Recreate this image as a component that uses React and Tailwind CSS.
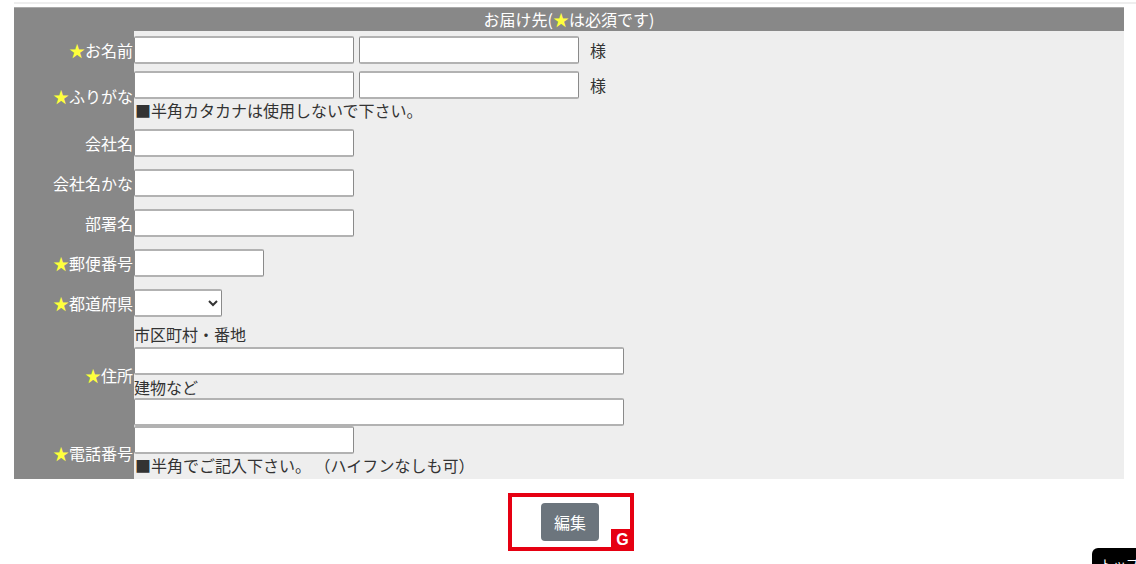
const inputCls =
  "h-[28px] bg-white border border-[#8a8a8a] border-t-2 border-b-2 border-t-[#b2b2b2] border-b-[#b2b2b2] rounded-[2px] box-border outline-none";

const Label = ({ text, required }) => (
  <div className="w-[120px] shrink-0 bg-[#888] flex items-center justify-end text-white text-[16px] leading-[20px] whitespace-nowrap pr-[1px]">
    {required && <span className="text-[#ffff3c]">★</span>}
    {text}
  </div>
);

const Row = ({ label, required, className = "", children }) => (
  <div className="flex">
    <Label text={label} required={required} />
    <div className={"flex-1 bg-[#eee] text-[#333] text-[16px] leading-[20px] " + className}>{children}</div>
  </div>
);

const App = () => {
  return (
    <main className="relative min-h-[564px] bg-white font-['Noto_Sans_CJK_JP','Noto_Sans',sans-serif] overflow-hidden">
      <div className="ml-[14px] mt-[2px] h-[2px] bg-[#eee]"></div>

      <div className="ml-[14px] mt-[3px] w-[1110px]">
        <div className="h-[24px] bg-[#888] border-t border-[#aaa] text-center text-white text-[16px] leading-[23px]">
          お届け先(<span className="text-[#ffff3c]">★</span>は必須です)
        </div>

        <Row label="お名前" required className="pt-[5px] pb-[4px]">
          <div className="flex items-center">
            <input type="text" className={inputCls + " w-[220px]"} />
            <input type="text" className={inputCls + " w-[220px] ml-[5px]"} />
            <span className="ml-[11px]">様</span>
          </div>
        </Row>

        <Row label="ふりがな" required className="pt-[3px] pb-[3px]">
          <div className="flex items-center">
            <input type="text" className={inputCls + " w-[220px]"} />
            <input type="text" className={inputCls + " w-[220px] ml-[5px]"} />
            <span className="ml-[11px]">様</span>
          </div>
          <p className="mt-[1px] pl-[1px]">■半角カタカナは使用しないで下さい。</p>
        </Row>

        <Row label="会社名" className="py-[6px]">
          <input type="text" className={inputCls + " w-[220px] block"} />
        </Row>
        <Row label="会社名かな" className="py-[6px]">
          <input type="text" className={inputCls + " w-[220px] block"} />
        </Row>
        <Row label="部署名" className="py-[6px]">
          <input type="text" className={inputCls + " w-[220px] block"} />
        </Row>
        <Row label="郵便番号" required className="py-[6px]">
          <input type="text" className={inputCls + " w-[130px] block"} />
        </Row>
        <Row label="都道府県" required className="py-[6px]">
          <select className={inputCls + " w-[88px] block text-[14px]"}>
            <option value=""></option>
          </select>
        </Row>

        <Row label="住所" required className="pt-[1px]">
          <p>市区町村・番地</p>
          <input type="text" className={inputCls + " w-[490px] block mt-[3px]"} />
          <p className="mt-[2px]">建物など</p>
          <input type="text" className={inputCls + " w-[490px] block mt-[1px]"} />
        </Row>

        <Row label="電話番号" required className="pb-[4px]">
          <input type="text" className={inputCls + " w-[220px] block"} />
          <p className="mt-[1px] pl-[1px]">■半角でご記入下さい。 （ハイフンなしも可）</p>
        </Row>
      </div>

      <div className="flex justify-center mt-[14px] pl-[6px]">
        <div className="relative w-[126px] h-[58px] border-4 border-[#e60012] flex justify-center pt-[6px]">
          <button className="w-[58px] h-[38px] bg-[#6c757d] text-white text-[16px] rounded-[4px] ml-[-2px]">
            編集
          </button>
          <span className="absolute right-[-4px] bottom-[-4px] w-[23px] h-[22px] bg-[#e60012] text-white font-['Liberation_Sans',sans-serif] font-bold text-[16px] leading-[22px] text-center">
            G
          </span>
        </div>
      </div>

      <div className="absolute left-[1092px] top-[548px] w-[70px] h-[30px] bg-black rounded-tl-[6px] text-white text-[13px] leading-[20px] pl-[8px] pt-[6px] whitespace-nowrap">
        トップ
      </div>
    </main>
  );
};

export default App;
